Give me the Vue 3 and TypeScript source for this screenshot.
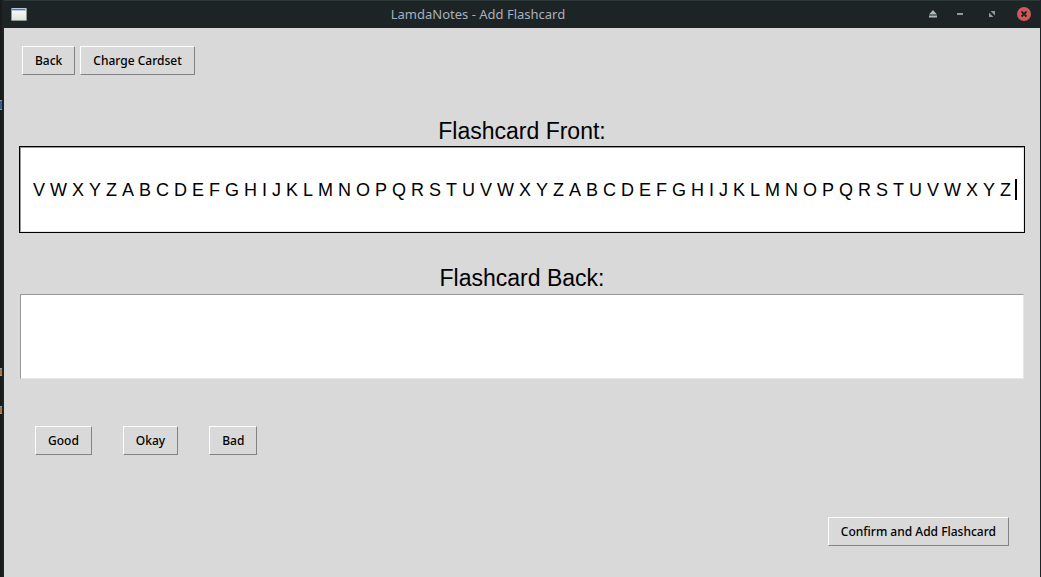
<script setup lang="ts">
import { ref } from 'vue'

const ratings: string[] = ['Good', 'Okay', 'Bad']
const front = ref<string>(
  'V W X Y Z A B C D E F G H I J K L M N O P Q R S T U V W X Y Z A B C D E F G H I J K L M N O P Q R S T U V W X Y Z',
)
const back = ref<string>('')
</script>

<template>
  <div class="desktop">
    <aside class="behind" aria-hidden="true">
      <i class="mark blue"></i>
      <i class="mark upper"></i>
      <i class="mark lower"></i>
    </aside>
    <div class="window">
      <header class="titlebar">
        <svg class="app-icon" width="16" height="13" viewBox="0 0 16 13" aria-hidden="true">
          <defs>
            <linearGradient id="pane" x1="0" y1="0" x2="0" y2="1">
              <stop offset="0" stop-color="#ffffff" />
              <stop offset="1" stop-color="#dfe2dc" />
            </linearGradient>
          </defs>
          <rect width="16" height="13" rx="1" fill="#8d978f" />
          <rect x="1" y="0" width="14" height="12" fill="url(#pane)" />
          <rect x="1" y="0" width="14" height="3" fill="#b8c9e4" />
          <rect x="1" y="1" width="13" height="1" fill="#5378b0" />
        </svg>
        <h1 class="title">LamdaNotes - Add Flashcard</h1>
        <div class="controls">
          <button type="button" class="control" aria-label="Shade">
            <svg width="8" height="8" viewBox="0 0 8 8">
              <path d="M4 0L8 4.5H0Z M0 5.5H8V7.5H0Z" fill="#aabdb9" />
            </svg>
          </button>
          <button type="button" class="control" aria-label="Minimize">
            <svg width="6" height="2" viewBox="0 0 6 2">
              <rect width="6" height="2" fill="#929b9b" />
            </svg>
          </button>
          <button type="button" class="control" aria-label="Maximize">
            <svg width="6" height="6" viewBox="0 0 6 6">
              <path d="M1.5 0H6V4.5Z M0 1.5L4.5 6H0Z" fill="#929b9b" />
            </svg>
          </button>
          <button type="button" class="control" aria-label="Close">
            <svg width="14" height="14" viewBox="0 0 14 14">
              <circle cx="7" cy="7" r="7" fill="#d2575d" />
              <path d="M4.5 4.5L9.5 9.5M9.5 4.5L4.5 9.5" stroke="#1c2425" stroke-width="1.8" />
            </svg>
          </button>
        </div>
      </header>

      <main class="content">
        <nav class="toolbar">
          <button type="button" class="btn">Back</button>
          <button type="button" class="btn">Charge Cardset</button>
        </nav>

        <div class="field">
          <label for="front">Flashcard Front:</label>
          <div class="entry focused">
            <input id="front" v-model="front" type="text" autocomplete="off" />
            <span class="caret"></span>
          </div>
        </div>

        <div class="field">
          <label for="back">Flashcard Back:</label>
          <div class="entry">
            <input id="back" v-model="back" type="text" autocomplete="off" />
          </div>
        </div>

        <div class="ratings">
          <button v-for="rating in ratings" :key="rating" type="button" class="btn">{{ rating }}</button>
        </div>

        <div class="actions">
          <button type="button" class="btn">Confirm and Add Flashcard</button>
        </div>
      </main>
    </div>
  </div>
</template>

<style>
body {
  margin: 0;
  background: #d9d9d9;
}
</style>

<style scoped>
.desktop {
  display: flex;
  min-height: 100vh;
  background: #1a1a1a;
}

.behind {
  position: relative;
  flex: none;
  width: 2px;
}

.mark {
  position: absolute;
  left: 0;
  width: 2px;
  height: 8px;
  background: #a87445;
  border-top: 1px solid #8d9dad;
  border-bottom: 1px solid #8d9dad;
  box-sizing: border-box;
}

.blue {
  top: 100px;
  height: 10px;
  background: #3a5c91;
}

.upper {
  top: 368px;
}

.lower {
  top: 406px;
}

.window {
  flex: 1;
  min-width: 0;
  display: flex;
  flex-direction: column;
  box-sizing: border-box;
  border: solid #1c2425;
  border-width: 0 1px 0 2px;
  background: #d9d9d9;
}

.titlebar {
  display: flex;
  align-items: center;
  height: 28px;
  box-sizing: border-box;
  padding: 0 9px 0 7px;
  background: #1c2425;
  box-shadow: inset 0 1px #2d3839;
}

.app-icon {
  display: block;
  flex: none;
}

.title {
  flex: 1;
  margin: 0;
  color: #a9b0bd;
  font: 400 13px/20px "Noto Sans", sans-serif;
  text-align: center;
  white-space: nowrap;
}

.controls {
  display: grid;
  grid-template-columns: 28px 32px 28px 14px;
}

.control {
  display: flex;
  align-items: center;
  justify-content: flex-start;
  height: 14px;
  padding: 0;
  border: 0;
  background: none;
}

.content {
  flex: 1;
  padding: 18px 15px 31px;
}

.toolbar {
  display: flex;
  gap: 5px;
  padding-left: 3px;
  margin-bottom: 41px;
}

.btn {
  box-sizing: border-box;
  height: 29px;
  padding: 0 12px;
  border: 1px solid;
  border-color: #ffffff #828282 #828282 #ffffff;
  border-radius: 0;
  background: #d9d9d9;
  color: #000000;
  font: 500 12px/20px "Noto Sans", sans-serif;
  white-space: nowrap;
}

.field {
  display: flex;
  flex-direction: column;
  margin-bottom: 30px;
}

.field label {
  color: #000000;
  font: 23px/30px "Liberation Sans", Arial, sans-serif;
  text-align: center;
}

.entry {
  position: relative;
  border: 1px solid transparent;
}

.focused {
  border-color: #000000;
}

.entry input {
  display: block;
  width: 100%;
  height: 85px;
  box-sizing: border-box;
  padding: 2px 6px 0;
  border: 1px solid;
  border-color: #979797 #e6e6e6 #e6e6e6 #979797;
  border-radius: 0;
  outline: 0;
  background: #ffffff;
  color: #000000;
  font: 18px/24px "Liberation Sans", Arial, sans-serif;
  font-kerning: none;
  text-align: center;
}

.caret {
  position: absolute;
  top: 32px;
  right: 7px;
  width: 2px;
  height: 21px;
  background: #000000;
}

.ratings {
  display: flex;
  gap: 31px;
  padding: 16px 16px 62px;
}

.actions {
  display: flex;
  justify-content: flex-end;
  padding-right: 16px;
}
</style>
